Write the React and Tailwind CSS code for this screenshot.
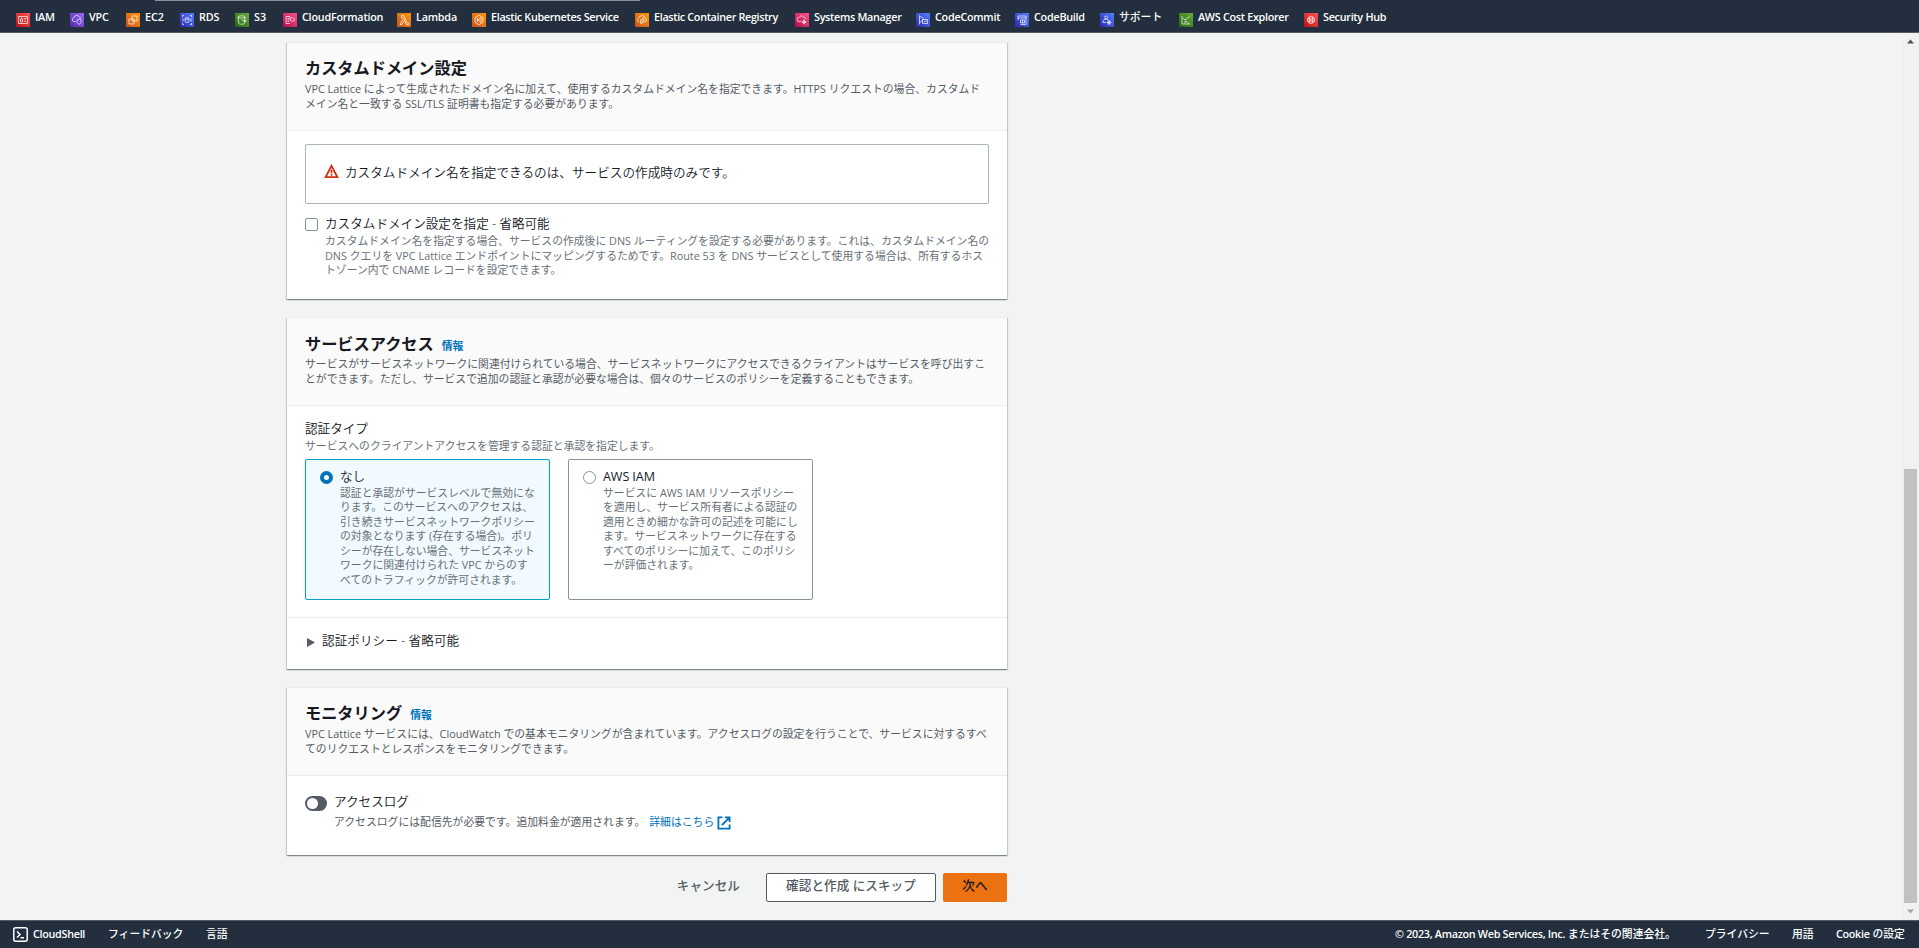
import React, { useState } from 'react';
import clsx from 'clsx';

// glyphs are drawn on a 14x14 grid
const services = [
  { name: 'IAM', color: 'from-[#bd0816] to-[#ff5252]', width: 'w-[54px]', track: 'tracking-[-0.2px]', icon: 'M2.500 3.500h9v7h-9zM4.500 6h2v3h-2zM5 5h1M8.500 5.500h2M8.500 7h1M8.500 8.500h1.500' },
  { name: 'VPC', color: 'from-[#4d27a8] to-[#a166ff]', width: 'w-[56px]', track: 'tracking-[-0.2px]', icon: 'M5.500 8.500H4a2 2 0 0 1-.2-3.900A3 3 0 0 1 9.300 4a1.500 1.500 0 0 1 1.500 1.500M7 7l2-1 2.200 1v2.500L9 11.500 7 9.500z' },
  { name: 'EC2', color: 'from-[#c8511b] to-[#ff9900]', width: 'w-[54px]', track: 'tracking-[-0.1px]', icon: 'M6 3h5v5H6zM3 6h5v5H3z' },
  { name: 'RDS', color: 'from-[#2e27ad] to-[#527fff]', width: 'w-[55px]', track: 'tracking-[-0.1px]', icon: 'M2.500 4V2.500H4M10 2.500h1.500V4M11.500 10v1.500H10M4 11.500H2.500V10M5 5.500c0-1 4-1 4 0v3c0 1-4 1-4 0zM5 5.500c0 1 4 1 4 0M3 5.500v3M11 5.500v3' },
  { name: 'S3', color: 'from-[#1b660f] to-[#6cae3e]', width: 'w-[48px]', track: 'tracking-[0px]', icon: 'M3 4c0-1.500 7-1.500 7 0s-7 1.500-7 0l.8 6.500c.5 1 5 1 5.500 0L10 4M6.500 7l4 1.500c1.500.3.5-1-.6-1.800' },
  { name: 'CloudFormation', color: 'from-[#b0084d] to-[#ff4f8b]', width: 'w-[114px]', track: 'tracking-[-0.22px]', icon: 'M7 10.500H3v-7h4V6M4.500 5.500H6M4.500 7H6M4.500 8.500H6M8 8a1.300 1.300 0 0 1 0-2.500c.5-1.500 2.500-1 2.500 0 1.500 0 1.500 2.500 0 2.500z' },
  { name: 'Lambda', color: 'from-[#c8511b] to-[#ff9900]', width: 'w-[75px]', track: 'tracking-[-0.2px]', icon: 'M4.500 2.500h2.300l3.300 7.500h1.400v1.500H9.300L6.200 4.500H4.500zM5.700 6.500L3 11.500h2L6.800 8' },
  { name: 'Elastic Kubernetes Service', color: 'from-[#c8511b] to-[#ff9900]', width: 'w-[163px]', track: 'tracking-[-0.33px]', icon: 'M7 2.300l4 2.300v4.800l-4 2.300-4-2.300V4.600zM5.500 5v4M8.500 5L6 7l2.500 2M9 4.500v5' },
  { name: 'Elastic Container Registry', color: 'from-[#c8511b] to-[#ff9900]', width: 'w-[160px]', track: 'tracking-[-0.33px]', icon: 'M3.500 9.500a4.300 4.300 0 1 1 7 0M5.500 10.500V7L9 5v4l-3.500 2M7.300 7v2.500' },
  { name: 'Systems Manager', color: 'from-[#b0084d] to-[#ff4f8b]', width: 'w-[121px]', track: 'tracking-[-0.3px]', icon: 'M6 8.500H4a2 2 0 0 1 0-4C5 2.300 8.500 2.500 9 4.500c1 0 1.500.5 1.500 1.500M9 7.500a1.500 1.500 0 1 0 .1 0M9 6.700v4.600M6.800 9h4.500' },
  { name: 'CodeCommit', color: 'from-[#2e27ad] to-[#527fff]', width: 'w-[99px]', track: 'tracking-[-0.25px]', icon: 'M3.500 2.500v9M3.500 3l4 2.500M3.500 10L8 6M6.500 6.500h5v4h-5zM8 9l1-1M10 7.500V9' },
  { name: 'CodeBuild', color: 'from-[#2e27ad] to-[#527fff]', width: 'w-[85px]', track: 'tracking-[-0.25px]', icon: 'M3 3h8M3 5h8M11 3v8.500H5.500M3 3v4M5.500 7h4v3h-4zM7.500 7v3' },
  { name: 'サポート', color: 'from-[#2e27ad] to-[#527fff]', width: 'w-[79px]', track: 'tracking-[0px]', icon: 'M6 3a1.500 1.500 0 1 0 .1 0M2.800 9.500c0-4 5-4 5.700-2M2.800 9.500H6M9 8a1.500 1.500 0 1 0 .1 0M9 7v5M6.800 9.500h4.500' },
  { name: 'AWS Cost Explorer', color: 'from-[#1b660f] to-[#6cae3e]', width: 'w-[125px]', track: 'tracking-[-0.3px]', icon: 'M3 3v8h8M4 5l2 2 4.500-3.500M6 7.500l4 3M6 8v2.500' },
  { name: 'Security Hub', color: 'from-[#bd0816] to-[#ff5252]', width: 'w-[100px]', track: 'tracking-[-0.28px]', icon: 'M7 3.300a3.600 3.600 0 1 0 .1 0M3.500 6h7M3.500 8h7M5.700 4v6M8.300 4v6' },
];

function Lines({ lines, className = 'text-[#687078]' }) {
  return (
    <p className={clsx('text-[10.8px] leading-[14.5px] tracking-[0.02px] whitespace-nowrap', className)}>
      {lines.map((line) => (
        <span key={line} className="block">{line}</span>
      ))}
    </p>
  );
}

// Latin words inside Japanese text
function En({ children }) {
  return <span className="tracking-[-0.3px] font-semibold">{children}</span>;
}

function TopBar() {
  return (
    <header className="h-[33px] shrink-0 bg-[#232f3e] border-b border-[#545b64]">
      <div className="ml-[155px] w-[485px] h-px bg-[#879596]"></div>
      <nav className="flex pl-4 pt-[9px]">
        {services.map((s) => (
          <a key={s.name} className={clsx('flex shrink-0 items-center h-[18px]', s.width)}>
            <span className={clsx('w-3.5 h-3.5 shrink-0 bg-linear-to-tr mt-px', s.color)}>
              <svg viewBox="0 0 14 14" className="w-3.5 h-3.5" fill="none" stroke="#fff" strokeWidth="0.7">
                <path d={s.icon} />
              </svg>
            </span>
            <span className={clsx('ml-[5px] -mt-[5px] text-[10.8px] leading-4 text-white whitespace-nowrap', s.name === 'サポート' ? 'font-medium' : 'font-semibold', s.track)}>{s.name}</span>
          </a>
        ))}
      </nav>
    </header>
  );
}

function Card({ title, info, description, className, titleClass, children }) {
  return (
    <section className={clsx('w-[720px] bg-white border-t border-[#eaeded] shadow-[0_1px_1px_0_rgba(0,28,36,0.3),1px_1px_1px_0_rgba(0,28,36,0.15),-1px_1px_1px_0_rgba(0,28,36,0.15)]', className)}>
      <div className="h-[88px] px-[18px] bg-[#fafafa] border-b border-[#eaeded]">
        <h2 className={clsx('flex items-baseline h-[39px] text-[16.2px] leading-6 font-bold text-[#16191f]', titleClass)}>
          {title}
          {info && <a className="ml-2 text-[10.8px] text-[#0073bb]">情報</a>}
        </h2>
        <Lines lines={description} className="text-[#545b64]" />
      </div>
      {children}
    </section>
  );
}

function Tile({ selected, label, lines, onClick }) {
  return (
    <div
      onClick={onClick}
      className={clsx('flex w-[245px] h-[141px] rounded-xs border pl-[14px] pt-2', selected ? 'bg-[#f1faff] border-[#00a1c9]' : 'bg-white border-[#879596]')}
    >
      <span className={clsx('w-[13px] h-[13px] mt-[3px] rounded-full shrink-0 bg-white', selected ? 'border-4 border-[#0073bb]' : 'border border-[#879596]')}></span>
      <div className="ml-[7px]">
        <div className="text-[12.6px] leading-[18px] font-[350] text-[#16191f]">{label}</div>
        <Lines lines={lines} />
      </div>
    </div>
  );
}

export default function App() {
  const [authType, setAuthType] = useState('none');

  return (
    <div className="flex flex-col w-[1919px] h-[948px] overflow-hidden bg-[#f2f3f3] text-[#16191f] font-['Open_Sans','Noto_Sans_CJK_JP',sans-serif]">
      <TopBar />
      <div className="flex flex-1 min-h-0">
        <main className="flex-1 pl-[287px] pt-[9px]">
          <Card
            title="カスタムドメイン設定"
            className="h-[257px]"
            titleClass="pt-[13px]"
            description={[
              'VPC Lattice によって生成されたドメイン名に加えて、使用するカスタムドメイン名を指定できます。HTTPS リクエストの場合、カスタムド',
              'メイン名と一致する SSL/TLS 証明書も指定する必要があります。',
            ]}
          >
            <div className="px-[18px] pt-[13px]">
              <div className="flex h-[60px] pl-[18px] pt-[18px] border border-[#aab7b8] rounded-xs">
                <svg viewBox="0 0 16 16" className="w-[15px] h-[15px] mt-px" fill="none" stroke="#d13212" strokeWidth="2">
                  <path d="M8 2L1.800 14h12.400z" />
                  <path d="M8 6v3.500M8 10.500v2" strokeWidth="1.800" />
                </svg>
                <span className="ml-[6px] mt-px text-[12.6px] leading-[18px] font-[350] tracking-[0.03px]">カスタムドメイン名を指定できるのは、サービスの作成時のみです。</span>
              </div>
              <div className="flex mt-3">
                <span className="w-[13px] h-[13px] mt-[2px] shrink-0 border border-[#879596] rounded-xs bg-white"></span>
                <div className="ml-[7px] -mt-px">
                  <div className="text-[12.6px] leading-[18px] font-[350]">カスタムドメイン設定を指定 - 省略可能</div>
                  <Lines
                    className="text-[#687078] mt-px"
                    lines={[
                      'カスタムドメイン名を指定する場合、サービスの作成後に DNS ルーティングを設定する必要があります。これは、カスタムドメイン名の',
                      'DNS クエリを VPC Lattice エンドポイントにマッピングするためです。Route 53 を DNS サービスとして使用する場合は、所有するホス',
                      'トゾーン内で CNAME レコードを設定できます。',
                    ]}
                  />
                </div>
              </div>
            </div>
          </Card>

          <Card
            title="サービスアクセス"
            info
            className="h-[352px] mt-[18px]"
            titleClass="pt-[14px]"
            description={[
              'サービスがサービスネットワークに関連付けられている場合、サービスネットワークにアクセスできるクライアントはサービスを呼び出すこ',
              'とができます。ただし、サービスで追加の認証と承認が必要な場合は、個々のサービスのポリシーを定義することもできます。',
            ]}
          >
            <div className="h-[212px] px-[18px] pt-[14px] border-b border-[#eaeded]">
              <div className="text-[12.6px] leading-[18px] font-[350]">認証タイプ</div>
              <Lines className="mt-px text-[#687078]" lines={['サービスへのクライアントアクセスを管理する認証と承認を指定します。']} />
              <div className="flex gap-[18px] mt-[5px]">
                <Tile
                  selected={authType === 'none'}
                  onClick={() => setAuthType('none')}
                  label="なし"
                  lines={[
                    '認証と承認がサービスレベルで無効にな',
                    'ります。このサービスへのアクセスは、',
                    '引き続きサービスネットワークポリシー',
                    'の対象となります (存在する場合)。ポリ',
                    'シーが存在しない場合、サービスネット',
                    'ワークに関連付けられた VPC からのす',
                    'べてのトラフィックが許可されます。',
                  ]}
                />
                <Tile
                  selected={authType === 'iam'}
                  onClick={() => setAuthType('iam')}
                  label={<span className="font-normal tracking-[-0.1px]">AWS IAM</span>}
                  lines={[
                    'サービスに AWS IAM リソースポリシー',
                    'を適用し、サービス所有者による認証の',
                    '適用ときめ細かな許可の記述を可能にし',
                    'ます。サービスネットワークに存在する',
                    'すべてのポリシーに加えて、このポリシ',
                    'ーが評価されます。',
                  ]}
                />
              </div>
            </div>
            <div className="flex items-center pl-[20px] pt-[14px]">
              <svg viewBox="0 0 8 9" className="w-2 h-[9px] mt-[3px]" fill="#545b64">
                <path d="M0 0l8 4.500-8 4.500z" />
              </svg>
              <span className="ml-[7px] text-[12.6px] leading-[18px] font-[350] tracking-[0.05px]">認証ポリシー - 省略可能</span>
            </div>
          </Card>

          <Card
            title="モニタリング"
            info
            className="h-[168px] mt-[18px]"
            titleClass="pt-[13px]"
            description={[
              'VPC Lattice サービスには、CloudWatch での基本モニタリングが含まれています。アクセスログの設定を行うことで、サービスに対するすべ',
              'てのリクエストとレスポンスをモニタリングできます。',
            ]}
          >
            <div className="flex pl-[18px] pt-[17px]">
              <span className="w-[22px] h-[15px] mt-[3px] p-[2px] rounded-full bg-[#545b64]">
                <span className="block w-[11px] h-[11px] rounded-full bg-white"></span>
              </span>
              <div className="ml-[7px]">
                <div className="text-[12.6px] leading-[18px] font-[350]">アクセスログ</div>
                <div className="flex mt-[3px] text-[10.8px] leading-[16px] tracking-[0.03px] text-[#545b64]">
                  アクセスログには配信先が必要です。追加料金が適用されます。
                  <a className="flex ml-1 text-[#0073bb]">
                    詳細はこちら
                    <svg viewBox="0 0 14 14" className="w-3.5 h-3.5 ml-[3px] mt-[2px]" fill="none" stroke="#0073bb" strokeWidth="1.800">
                      <path d="M5.500 1.400H1.400v11.200h11.200V8.500M8 1.400h4.600V6M12.600 1.400L5 9" />
                    </svg>
                  </a>
                </div>
              </div>
            </div>
          </Card>

          <div className="flex justify-end w-[720px] mt-[18px] text-[12.6px] leading-[23px] font-medium tracking-[0.05px] text-[#545b64]">
            <button className="h-[29px] pb-[4px] mr-[26px]">キャンセル</button>
            <button className="w-[170px] h-[29px] pb-[4px] mr-[7px] bg-white border border-[#545b64] rounded-xs">確認と作成 にスキップ</button>
            <button className="w-16 h-[29px] pb-[4px] bg-[#ec7211] text-[#16191f] rounded-xs">次へ</button>
          </div>
        </main>

        <div className="flex flex-col items-center w-[17px] bg-[#f1f1f1]">
          <svg viewBox="0 0 17 17" className="w-[17px] h-[17px]" fill="#505050">
            <path d="M8.500 6.500l3.500 4H5z" />
          </svg>
          <div className="w-[13px] h-[434px] mt-[419px] bg-[#c1c1c1]"></div>
          <svg viewBox="0 0 17 17" className="w-[17px] h-[17px]" fill="#a3a3a3">
            <path d="M5 6.500h7l-3.500 4z" />
          </svg>
        </div>
      </div>

      <footer className="flex h-7 shrink-0 pl-[13px] pr-[14px] pt-1 bg-[#232f3e] border-t border-[#545b64] text-[10.8px] leading-[17px] font-medium text-white whitespace-nowrap">
        <svg viewBox="0 0 15 15" className="w-[15px] h-[15px] mt-[2px]" fill="none" stroke="#fff" strokeWidth="1.500">
          <rect x="0.750" y="0.750" width="13.500" height="13.500" rx="2" />
          <path d="M4 4.500l3 3-3 3M7.500 10.800h3.500" />
        </svg>
        <a className="ml-[5px] w-[75px]"><En>CloudShell</En></a>
        <a className="w-[98px]">フィードバック</a>
        <a>言語</a>
        <span className="ml-auto w-[310px]"><En>© 2023, Amazon Web Services, Inc.</En> またはその関連会社。</span>
        <a className="w-[87px]">プライバシー</a>
        <a className="w-[44px]">用語</a>
        <a className="w-[69px]"><En>Cookie</En> の設定</a>
      </footer>
    </div>
  );
}
